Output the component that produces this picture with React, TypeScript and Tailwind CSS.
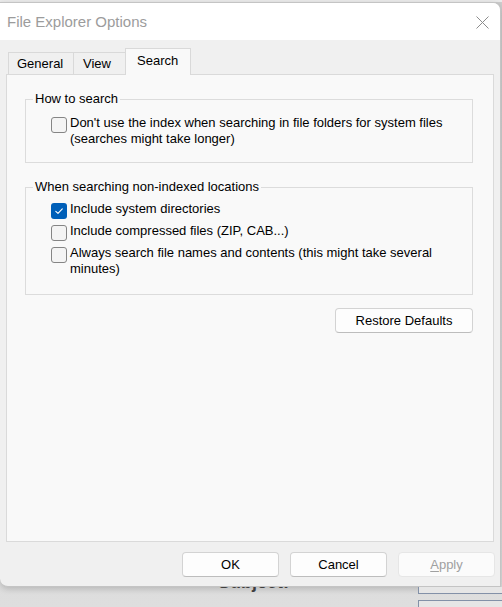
import React from "react";

function CheckBox({ checked = false }: { checked?: boolean }) {
    if (checked) {
        return (
            <span className="mt-[2px] flex h-[16px] w-[16px] shrink-0 items-center justify-center rounded-[3px] bg-[#005fb8]">
                <svg width="10" height="10" viewBox="0 0 10 10" fill="none">
                    <path d="M1.8 5.3 L4 7.4 L8.3 2.8" stroke="#ffffff" strokeWidth="1.1" strokeLinecap="round" strokeLinejoin="round" />
                </svg>
            </span>
        );
    }
    return <span className="mt-[2px] h-[16px] w-[16px] shrink-0 rounded-[3px] border border-[#858585] bg-[#f4f4f4]" />;
}

function Option({ checked, children }: { checked?: boolean; children: React.ReactNode }) {
    return (
        <label className="flex items-start gap-[3px]">
            <CheckBox checked={checked} />
            <span className="text-[13px] leading-[16px] text-black">{children}</span>
        </label>
    );
}

function Button({ children, disabled = false, className = "" }: { children: React.ReactNode; disabled?: boolean; className?: string }) {
    return (
        <button
            className={
                disabled
                    ? `flex h-[25px] items-center justify-center rounded-[4px] border border-[#e6e6e6] bg-[#fbfbfb] text-[13px] text-[#a0a0a0] ${className}`
                    : `flex h-[25px] items-center justify-center rounded-[4px] border border-[#d3d3d3] border-b-[#bdbdbd] bg-[#fdfdfd] text-[13px] text-black ${className}`
            }
        >
            {children}
        </button>
    );
}

export default function App() {
    return (
        <div className="h-[607px] w-[502px] overflow-hidden bg-gradient-to-b from-[#cdcdcd] to-[#dedede] font-['Liberation_Sans',Arial,sans-serif]">
            <div className="h-[2px] bg-[#ebebeb]" />

            {/* dialog window */}
            <div className="flex h-[585px] w-[501px] flex-col overflow-hidden rounded-tr-[8px] rounded-bl-[8px] border-t border-r border-b border-[#c4c4c4] bg-[#f0f0f0] shadow-[0_2px_6px_rgba(0,0,0,0.18)]">
                <div className="flex h-[37px] shrink-0 items-center justify-between bg-white pl-[7px] pr-[11px] pt-[1px]">
                    <span className="text-[15px] leading-[18px] text-[#9c9c9c]">File Explorer Options</span>
                    <svg width="13" height="13" viewBox="0 0 13 13" fill="none">
                        <path d="M0.5 0.5 L12.5 12.5 M12.5 0.5 L0.5 12.5" stroke="#8c8c8c" strokeWidth="1" />
                    </svg>
                </div>

                <div className="flex flex-1 flex-col pl-[6px]">
                    {/* tabs */}
                    <div className="flex h-[34px] items-end pl-[2px]">
                        <div className="h-[22px] w-[66px] border-l border-t border-r border-[#d9d9d9] pl-[8px] pt-[3px] text-[13px] leading-[16px] text-black">
                            General
                        </div>
                        <div className="h-[22px] w-[51px] border-t border-[#d9d9d9] pl-[9px] pt-[3px] text-[13px] leading-[16px] text-black">
                            View
                        </div>
                        <div className="relative z-10 -mb-px h-[27px] w-[66px] border-l border-t border-r border-[#d9d9d9] bg-[#f9f9f9] pl-[11px] pt-[4px] text-[13px] leading-[16px] text-black">
                            Search
                        </div>
                    </div>

                    {/* tab panel */}
                    <div className="flex h-[468px] w-[488px] flex-col border border-[#dadada] bg-[#f9f9f9] pl-[18px] pt-[16px]">
                        <fieldset className="w-[448px] border border-[#dcdcdc] pl-[7px]">
                            <legend className="px-[2px] text-[13px] leading-[16px] text-black">How to search</legend>
                            <div className="ml-[18px] pb-[15px] pt-[8px]">
                                <Option>
                                    Don't use the index when searching in file folders for system files
                                    <br />
                                    (searches might take longer)
                                </Option>
                            </div>
                        </fieldset>

                        <fieldset className="mt-[16px] w-[448px] border border-[#dcdcdc] pl-[7px]">
                            <legend className="px-[2px] text-[13px] leading-[16px] text-black">When searching non-indexed locations</legend>
                            <div className="ml-[18px] flex flex-col gap-[4px] pb-[17px] pt-[6px]">
                                <Option checked>Include system directories</Option>
                                <Option>Include compressed files (ZIP, CAB...)</Option>
                                <Option>
                                    Always search file names and contents (this might take several
                                    <br />
                                    minutes)
                                </Option>
                            </div>
                        </fieldset>

                        <div className="mt-[13px] flex w-[448px] justify-end">
                            <Button className="w-[138px]">Restore Defaults</Button>
                        </div>
                    </div>

                    {/* dialog buttons */}
                    <div className="mt-[10px] flex justify-end gap-[11px] pr-[5px]">
                        <Button className="w-[97px]">OK</Button>
                        <Button className="w-[97px]">Cancel</Button>
                        <Button disabled className="w-[97px]">
                            <span className="underline underline-offset-2">A</span>pply
                        </Button>
                    </div>
                </div>
            </div>

            {/* page behind the dialog */}
            <div className="flex h-[20px] overflow-hidden">
                <span className="ml-[218px] -mt-[14px] text-[18px] font-bold leading-[18px] text-[#3f3f3f]">Subject:</span>
                <div className="ml-[auto] flex w-[84px] flex-col">
                    <div className="-mt-[1px] h-[11px] overflow-hidden border-b border-l border-[#8391a8] bg-[#e6e6e6] pl-[4px]">
                        <div className="-mt-[11px] text-[14px] leading-[14px] text-[#333]">Ref: At the</div>
                    </div>
                    <div className="mt-[6px] h-[10px] border-t border-l border-[#8391a8] bg-[#e6e6e6]" />
                </div>
            </div>
        </div>
    );
}
